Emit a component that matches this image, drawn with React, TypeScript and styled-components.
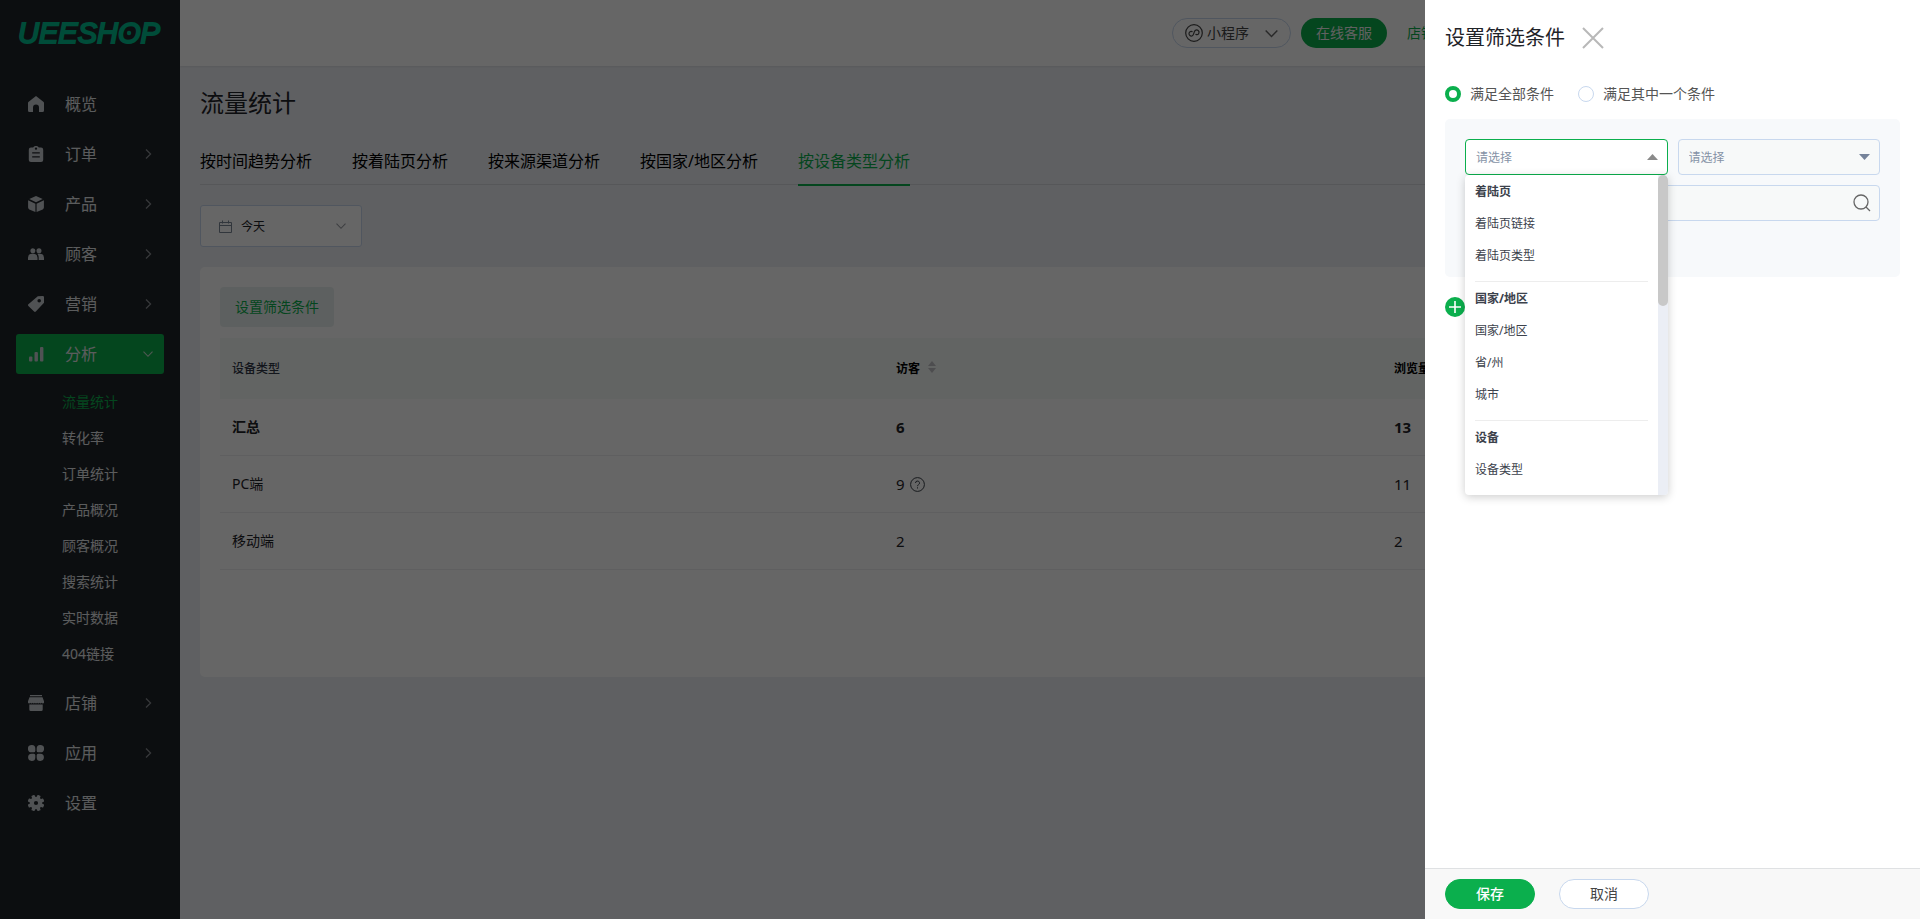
import React from "react";
import styled, { createGlobalStyle, css } from "styled-components";

const green = "#0baf4d";

const GlobalStyle = createGlobalStyle`
  *, *::before, *::after { box-sizing: border-box; }
  body {
    margin: 0;
    background: #eef0f5;
    color: #1f2328;
    font-family: "Noto Sans", "Noto Sans CJK SC", sans-serif;
    font-size: 14px;
    line-height: 20px;
  }
  button, input, select { font: inherit; color: inherit; margin: 0; }
  button { cursor: pointer; border: 0; background: none; padding: 0; }
  a { color: inherit; text-decoration: none; }
  ul { list-style: none; margin: 0; padding: 0; }
  h1, h2 { margin: 0; font-weight: 400; }
`;

const Page = styled.div`
  display: flex;
  min-height: 100vh;
`;

/* Sidebar */
const Sidebar = styled.aside`
  flex: none;
  width: 180px;
  padding: 0 16px;
  background: #20252a;
  color: #e4e6e8;
`;
const Logo = styled.a`
  display: block;
  height: 84px;
  padding: 18px 0 0 2px;
  svg { display: block; }
`;
const Menu = styled.ul`
  display: flex;
  flex-direction: column;
  gap: 10px;
`;
const MenuLink = styled.a<{ $active?: boolean }>`
  display: flex;
  align-items: center;
  height: 40px;
  padding: 0 11px 0 12px;
  border-radius: 3px;
  font-size: 16px;
  background: ${(p) => (p.$active ? green : "transparent")};
  > svg:first-child { flex: none; margin-right: 21px; fill: #c9cdd3; }
  > span { flex: 1; }
`;
const SubMenu = styled.ul`
  padding: 10px 0 1px 46px;
`;
const SubLink = styled.a<{ $active?: boolean }>`
  display: block;
  line-height: 36px;
  color: ${(p) => (p.$active ? green : "inherit")};
`;

/* Main column */
const Main = styled.main`
  flex: 1;
  min-width: 0;
`;
const TopBar = styled.header`
  display: flex;
  justify-content: flex-end;
  align-items: center;
  height: 66px;
  padding-right: 485px;
  background: #fff;
  box-shadow: 0 1px 2px rgba(0, 0, 0, 0.08);
`;
const AppSwitch = styled.button`
  display: flex;
  align-items: center;
  height: 30px;
  width: 119px;
  padding: 0 12px;
  border: 1px solid #c8d8ee;
  border-radius: 15px;
  color: #444;
  span { flex: 1; text-align: left; padding-left: 4px; }
`;
const ServiceButton = styled.button`
  height: 30px;
  padding: 0 15px;
  margin: 0 20px 0 10px;
  border-radius: 15px;
  background: ${green};
  color: #f2f2f2;
`;
const ShopLink = styled.a`
  color: ${green};
`;
const Content = styled.div`
  padding: 20px;
`;
const Title = styled.h1`
  font-size: 24px;
  line-height: 34px;
`;
const Tabs = styled.nav`
  display: flex;
  gap: 40px;
  height: 46px;
  margin: 19px 0 20px;
  border-bottom: 1px solid #d6d9de;
`;
const Tab = styled.a<{ $active?: boolean }>`
  height: 47px;
  font-size: 16px;
  line-height: 44px;
  color: #000;
  ${(p) =>
    p.$active &&
    css`
      color: ${green};
      border-bottom: 2px solid ${green};
    `}
`;
const DateField = styled.label`
  display: flex;
  align-items: center;
  width: 162px;
  height: 42px;
  padding: 0 15px 0 18px;
  border: 1px solid #c8d8ee;
  border-radius: 3px;
  background: #fff;
  font-size: 12px;
`;
const DateSelect = styled.select`
  flex: 1;
  appearance: none;
  border: 0;
  outline: 0;
  padding: 1px 0 0 9px;
  background: none;
`;
const Card = styled.section`
  min-height: 410px;
  margin-top: 20px;
  padding: 20px;
  border-radius: 5px;
  background: #fff;
`;
const FilterButton = styled.button`
  display: block;
  width: 114px;
  height: 40px;
  margin-bottom: 11px;
  border-radius: 4px;
  background: #e9f1f0;
  color: ${green};
`;
const Table = styled.table`
  width: 100%;
  table-layout: fixed;
  border-collapse: separate;
  border-spacing: 0;
  text-align: left;
`;
const HeadCell = styled.th<{ $width: string; $muted?: boolean }>`
  width: ${(p) => p.$width};
  height: 61px;
  padding: 1px 12px 0;
  background: #f5f9f8;
  font-size: 12px;
  font-weight: ${(p) => (p.$muted ? 500 : 700)};
  color: ${(p) => (p.$muted ? "#303846" : "#000")};
  svg { margin-left: 8px; }
`;
const Cell = styled.td<{ $number?: boolean }>`
  height: 57px;
  padding: 0 12px;
  border-bottom: 1px solid #edeef0;
  font-size: ${(p) => (p.$number ? 15 : 14)}px;
`;
const Row = styled.tr<{ $total?: boolean }>`
  font-weight: ${(p) => (p.$total ? 700 : 400)};
`;
const HelpValue = styled.span`
  display: flex;
  align-items: center;
  gap: 5px;
`;

/* Drawer */
const Overlay = styled.div`
  position: fixed;
  inset: 0;
  display: flex;
  justify-content: flex-end;
  background: rgba(0, 0, 0, 0.6);
`;
const Drawer = styled.form`
  display: flex;
  flex-direction: column;
  width: 495px;
  background: #fff;
`;
const DrawerBody = styled.div`
  flex: 1;
  padding: 23px 20px 0;
`;
const DrawerHead = styled.div`
  display: flex;
  align-items: center;
  gap: 17px;
  height: 30px;
  h2 { font-size: 20px; }
  svg { display: block; }
`;
const RadioRow = styled.div`
  display: flex;
  gap: 24px;
  margin: 31px 0 15px;
`;
const RadioLabel = styled.label`
  display: flex;
  align-items: center;
  gap: 9px;
  color: #555;
`;
const Radio = styled.input`
  appearance: none;
  width: 16px;
  height: 16px;
  border: 1px solid #c8d8ee;
  border-radius: 50%;
  background: #fff;
  &:checked { border: 4px solid ${green}; }
`;
const ConditionBox = styled.div`
  display: grid;
  grid-template-columns: 1fr 1fr;
  gap: 10px;
  padding: 20px 20px 56px;
  border-radius: 5px;
  background: #f7f9fb;
`;
const SelectField = styled.div`
  position: relative;
  > svg {
    position: absolute;
    right: 10px;
    top: 15px;
    pointer-events: none;
  }
`;
const Select = styled.select<{ $open?: boolean }>`
  display: block;
  appearance: none;
  width: 100%;
  height: 36px;
  padding: 1px 10px 0;
  border: 1px solid ${(p) => (p.$open ? green : "#c8d8ee")};
  border-radius: 4px;
  outline: 0;
  background: ${(p) => (p.$open ? "#fff" : "#f7f9f9")};
  color: #8592a6;
  font-size: 12px;
`;
const SearchField = styled.div`
  grid-column: 1 / -1;
  display: flex;
  align-items: center;
  height: 36px;
  padding: 0 8px 0 10px;
  border: 1px solid #c8d8ee;
  border-radius: 4px;
  background: #f7f9f9;
  input { flex: 1; border: 0; outline: 0; background: none; }
  svg { display: block; }
`;
const Dropdown = styled.div`
  position: absolute;
  z-index: 2;
  top: 36px;
  left: 0;
  right: 0;
  display: flex;
  height: 320px;
  border-radius: 4px;
  overflow: hidden;
  background: #fff;
  box-shadow: 0 2px 10px rgba(0, 0, 0, 0.2);
`;
const Options = styled.div`
  flex: 1;
  padding: 0 10px;
  font-size: 12px;
  color: #3c424c;
`;
const Group = styled.ul`
  padding: 1px 0 9px;
  & + & { border-top: 1px solid #ededed; }
`;
const Option = styled.li<{ $heading?: boolean }>`
  line-height: 32px;
  font-weight: ${(p) => (p.$heading ? 700 : 400)};
`;
const ScrollTrack = styled.div`
  width: 10px;
  background: #ebeef5;
`;
const ScrollThumb = styled.div`
  height: 131px;
  border-radius: 5px;
  background: #c8c8c8;
`;
const AddButton = styled.button`
  display: block;
  margin-top: 20px;
  svg { display: block; }
`;
const DrawerFoot = styled.footer`
  display: flex;
  gap: 24px;
  padding: 10px 20px;
  border-top: 1px solid #dfe1e3;
  background: #f8f8f8;
`;
const FootButton = styled.button<{ $primary?: boolean }>`
  width: 90px;
  height: 30px;
  border: 1px solid ${(p) => (p.$primary ? green : "#c8d8ee")};
  border-radius: 15px;
  background: ${(p) => (p.$primary ? green : "#fff")};
  color: ${(p) => (p.$primary ? "#fff" : "#444")};
  font-weight: ${(p) => (p.$primary ? 500 : 400)};
`;

const Chevron = ({ dir, w = 10, color = "#777" }: { dir: "right" | "down"; w?: number; color?: string }) =>
  dir === "down" ? (
    <svg width={w} height={w} viewBox="0 0 10 10" fill="none" stroke={color} strokeWidth="1.1">
      <path d="M.5 2.7 5 7.3 9.5 2.7" />
    </svg>
  ) : (
    <svg width={w} height={w} viewBox="0 0 10 10" fill="none" stroke={color} strokeWidth="1.2">
      <path d="M3 .5 7.6 5 3 9.5" />
    </svg>
  );

const icons: Record<string, React.ReactNode> = {
  home: <path d="M8 0 .7 5.8A1.6 1.6 0 0 0 0 7.1V14.5a1.5 1.5 0 0 0 1.5 1.5H5V11.500a3 3 0 0 1 6 0V16h3.500a1.500 1.500 0 0 0 1.500-1.500V7.100a1.600 1.600 0 0 0-.7-1.300Z" />,
  order: (
    <path fillRule="evenodd" d="M3 1.500h2.200C5.500.6 6.600 0 8 0s2.500.6 2.800 1.500H13A2.200 2.200 0 0 1 15.200 3.700v10A2.200 2.200 0 0 1 13 16H3A2.200 2.200 0 0 1 .8 13.700v-10A2.200 2.200 0 0 1 3 1.500ZM4.200 6.300v1.200h7.600V6.300Zm0 4v1.200h7.600v-1.200ZM8 1.400a1.200 1.200 0 1 0 0 2.400 1.200 1.200 0 0 0 0-2.400Z" />
  ),
  box: <path d="M8 0 1.300 2.900 8 6.200l6.700-3.300ZM.1 4.200 7.400 7.700V16L1.300 13.400A2 2 0 0 1 .1 11.600ZM15.900 4.200 8.600 7.700V16l6.100-2.600a2 2 0 0 0 1.200-1.800Z" />,
  people: (
    <path d="M4.900 2.200a2.500 2.500 0 1 1 0 5 2.500 2.500 0 0 1 0-5ZM11 2.200a2.500 2.500 0 1 1 0 5 2.500 2.500 0 0 1 0-5ZM0 14v-2.300a4 4 0 0 1 4-3.900h2a4 4 0 0 1 3.500 3.900V14ZM10.700 14v-2.500c0-1.500-.5-2.800-1.500-3.700H12a4 4 0 0 1 4 3.900V14Z" />
  ),
  tag: <path fillRule="evenodd" d="M9.800.3 14.800 0A1.200 1.200 0 0 1 16 1.200V6.800L7.800 15.500a1.200 1.200 0 0 1-1.700 0L.4 9.900a1.200 1.200 0 0 1 0-1.700ZM11.200 3a1.800 1.800 0 1 0 0 3.600 1.800 1.800 0 0 0 0-3.600Z" />,
  chart: (
    <>
      <rect x="1" y="10.500" width="3.400" height="5" rx="1" />
      <rect x="6.500" y="6" width="3.400" height="9.500" rx="1" />
      <rect x="12" y="1" width="3.400" height="14.500" rx="1" />
    </>
  ),
  shop: (
    <path d="M2 0h12v1.300H2ZM1.500 2.300h13L16 6.300v1.500c-.5.8-1.700.8-2.300 0-.5.8-1.800.8-2.300 0-.5.8-1.800.8-2.300 0-.5.8-1.700.8-2.200 0-.5.8-1.800.8-2.300 0-.5.8-1.800.8-2.300 0-.5.8-1.800.8-2.300 0V6.300ZM1.300 9.500h13.400V14.500A1.500 1.500 0 0 1 13.200 16H2.800A1.500 1.500 0 0 1 1.300 14.500Z" />
  ),
  apps: (
    <path d="M3.600 0a3.600 3.600 0 0 1 3.700 3.600v2.200a1.500 1.500 0 0 1-1.500 1.500H3.600A3.600 3.600 0 0 1 3.600 0ZM12.400 0a3.600 3.600 0 0 1 0 7.300h-2.200a1.500 1.500 0 0 1-1.500-1.500V3.600A3.600 3.600 0 0 1 12.400 0ZM3.600 8.700h2.200a1.500 1.500 0 0 1 1.500 1.500v2.200A3.600 3.600 0 1 1 3.600 8.700ZM10.200 8.700h2.200a3.600 3.600 0 1 1-3.700 3.700v-2.200a1.500 1.500 0 0 1 1.500-1.500Z" />
  ),
  gear: (
    <>
      <circle cx="8" cy="8" r="4.200" fill="none" stroke="#c9cdd3" strokeWidth="4.200" />
      {[0, 1, 2, 3, 4, 5, 6, 7].map((n) => (
        <rect key={n} x="6.300" y="-.3" width="3.400" height="4" rx=".8" transform={`rotate(${22.5 + n * 45} 8 8)`} />
      ))}
    </>
  ),
};

type Item = { icon: string; label: string; more?: boolean; sub?: string[] };
const menu: Item[] = [
  { icon: "home", label: "概览" },
  { icon: "order", label: "订单", more: true },
  { icon: "box", label: "产品", more: true },
  { icon: "people", label: "顾客", more: true },
  { icon: "tag", label: "营销", more: true },
  {
    icon: "chart",
    label: "分析",
    sub: ["流量统计", "转化率", "订单统计", "产品概况", "顾客概况", "搜索统计", "实时数据", "404链接"],
  },
  { icon: "shop", label: "店铺", more: true },
  { icon: "apps", label: "应用", more: true },
  { icon: "gear", label: "设置" },
];
const tabs = ["按时间趋势分析", "按着陆页分析", "按来源渠道分析", "按国家/地区分析", "按设备类型分析"];
const rows = [
  { name: "汇总", visitors: 6, views: 13, total: true },
  { name: "PC端", visitors: 9, views: 11, help: true },
  { name: "移动端", visitors: 2, views: 2 },
];
const groups = [
  ["着陆页", "着陆页链接", "着陆页类型"],
  ["国家/地区", "国家/地区", "省/州", "城市"],
  ["设备", "设备类型"],
];

const Sort = () => (
  <svg width="8" height="12" viewBox="0 0 8 12" fill="#c0c1c5">
    <path d="M4 0 8 5H0ZM0 7h8l-4 5Z" />
  </svg>
);

export default function App() {
  return (
    <>
      <GlobalStyle />
      <Page>
        <Sidebar>
          <Logo href="#">
            <svg width="146" height="30" viewBox="0 0 146 30" fill="#00be8e">
              <text x="0" y="25" fontFamily="Liberation Sans, sans-serif" fontSize="29" fontStyle="italic" stroke="#00be8e" strokeWidth="2">
                UEESHOP
              </text>
              <circle cx="111" cy="15" r="2.200" />
            </svg>
          </Logo>
          <Menu>
            {menu.map((m) => (
              <li key={m.label}>
                <MenuLink href="#" $active={!!m.sub}>
                  <svg width="16" height="16" viewBox="0 0 16 16">{icons[m.icon]}</svg>
                  <span>{m.label}</span>
                  {m.more && <Chevron dir="right" color="#8b8f94" />}
                  {m.sub && <Chevron dir="down" color="#c9dccf" />}
                </MenuLink>
                {m.sub && (
                  <SubMenu>
                    {m.sub.map((s, i) => (
                      <li key={s}>
                        <SubLink href="#" $active={i === 0}>{s}</SubLink>
                      </li>
                    ))}
                  </SubMenu>
                )}
              </li>
            ))}
          </Menu>
        </Sidebar>
        <Main>
          <TopBar>
            <AppSwitch type="button">
              <svg width="18" height="18" viewBox="0 0 18 18" fill="none" stroke="#444" strokeWidth="1.200">
                <circle cx="9" cy="9" r="8.300" />
                <path d="M6.700 8.400a2.300 2.300 0 1 0 2.100 3.300c.5-1-.3-4 .4-5.400a2.300 2.300 0 1 1 2.100 3.300" strokeLinecap="round" transform="rotate(22 9 9)" />
              </svg>
              <span>小程序</span>
              <Chevron dir="down" w={13} color="#666" />
            </AppSwitch>
            <ServiceButton type="button">在线客服</ServiceButton>
            <ShopLink href="#">店铺</ShopLink>
          </TopBar>
          <Content>
            <Title>流量统计</Title>
            <Tabs>
              {tabs.map((t, i) => (
                <Tab key={t} href="#" $active={i === 4}>{t}</Tab>
              ))}
            </Tabs>
            <DateField>
              <svg width="13" height="13" viewBox="0 0 13 13" fill="none" stroke="#7c8797">
                <path d="M.5 2.500h12v10H.5ZM.5 5.500h12M3.500.5v3M9.500.5v3" />
              </svg>
              <DateSelect defaultValue="今天">
                <option>今天</option>
              </DateSelect>
              <Chevron dir="down" color="#9a9da3" />
            </DateField>
            <Card>
              <FilterButton type="button">设置筛选条件</FilterButton>
              <Table>
                <thead>
                  <tr>
                    <HeadCell $width="40%" $muted>设备类型</HeadCell>
                    <HeadCell $width="30%">访客<Sort /></HeadCell>
                    <HeadCell $width="30%">浏览量</HeadCell>
                  </tr>
                </thead>
                <tbody>
                  {rows.map((r) => (
                    <Row key={r.name} $total={r.total}>
                      <Cell>{r.name}</Cell>
                      <Cell $number>
                        <HelpValue>
                          {r.visitors}
                          {r.help && (
                            <svg width="15" height="15" viewBox="0 0 15 15" fill="none" stroke="#3a4048">
                              <circle cx="7.500" cy="7.500" r="6.900" />
                              <path d="M5.500 6a2 2 0 1 1 2.900 1.800c-.6.3-.9.6-.9 1.400M7.500 10.300v1.200" />
                            </svg>
                          )}
                        </HelpValue>
                      </Cell>
                      <Cell $number>{r.views}</Cell>
                    </Row>
                  ))}
                </tbody>
              </Table>
            </Card>
          </Content>
        </Main>
      </Page>
      <Overlay>
        <Drawer>
          <DrawerBody>
            <DrawerHead>
              <h2>设置筛选条件</h2>
              <button type="button">
                <svg width="22" height="22" viewBox="0 0 22 22" stroke="#b8b8b8" strokeWidth="2">
                  <path d="M1 1l20 20M21 1 1 21" />
                </svg>
              </button>
            </DrawerHead>
            <RadioRow>
              <RadioLabel>
                <Radio type="radio" name="match" defaultChecked />
                满足全部条件
              </RadioLabel>
              <RadioLabel>
                <Radio type="radio" name="match" />
                满足其中一个条件
              </RadioLabel>
            </RadioRow>
            <ConditionBox>
              <SelectField>
                <Select $open>
                  <option>请选择</option>
                </Select>
                <svg width="11" height="6" viewBox="0 0 11 6" fill="#8a8a8a"><path d="M5.500 0 11 6H0Z" /></svg>
                <Dropdown>
                  <Options>
                    {groups.map((g) => (
                      <Group key={g[0]}>
                        {g.map((o, i) => (
                          <Option key={i} $heading={i === 0}>{o}</Option>
                        ))}
                      </Group>
                    ))}
                  </Options>
                  <ScrollTrack>
                    <ScrollThumb />
                  </ScrollTrack>
                </Dropdown>
              </SelectField>
              <SelectField>
                <Select>
                  <option>请选择</option>
                </Select>
                <svg width="11" height="6" viewBox="0 0 11 6" fill="#75839a"><path d="M0 0h11L5.500 6Z" /></svg>
              </SelectField>
              <SearchField>
                <input type="text" />
                <button type="button">
                  <svg width="18" height="18" viewBox="0 0 18 18" fill="none" stroke="#666" strokeWidth="1.300">
                    <circle cx="8" cy="8" r="7" />
                    <path d="M13 13l4 4" />
                  </svg>
                </button>
              </SearchField>
            </ConditionBox>
            <AddButton type="button">
              <svg width="20" height="20" viewBox="0 0 20 20">
                <circle cx="10" cy="10" r="10" fill={green} />
                <path d="M10 4v12M4 10h12" stroke="#fff" strokeWidth="1.600" />
              </svg>
            </AddButton>
          </DrawerBody>
          <DrawerFoot>
            <FootButton type="button" $primary>保存</FootButton>
            <FootButton type="button">取消</FootButton>
          </DrawerFoot>
        </Drawer>
      </Overlay>
    </>
  );
}
